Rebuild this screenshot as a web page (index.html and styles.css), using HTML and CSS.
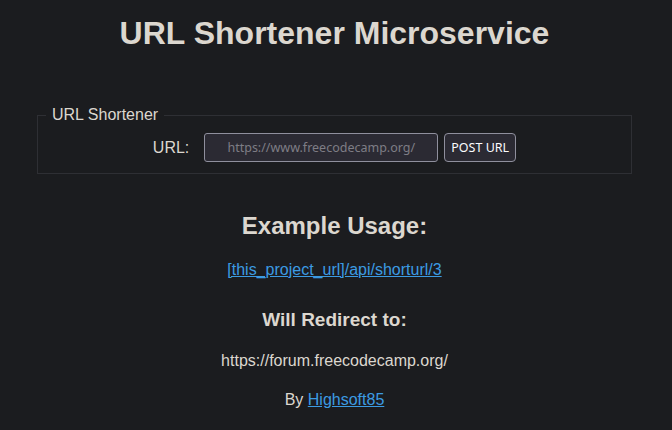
FILE: index.html
```html
<!DOCTYPE html>
<html lang="en">
<head>
    <meta charset="UTF-8">
    <meta name="viewport" content="width=device-width, initial-scale=1.0">
    <title>URL Shortener Microservice</title>
    <link rel="stylesheet" href="styles.css">
</head>
<body>
    <div class="container">
        <h1>URL Shortener Microservice</h1>

        <form class="shortener" action="api/shorturl" method="POST">
            <fieldset>
                <legend>URL Shortener</legend>
                <div class="row">
                    <label for="url_input">URL:</label>
                    <input id="url_input" type="text" name="url" placeholder="https://www.freecodecamp.org/">
                    <button type="submit">POST URL</button>
                </div>
            </fieldset>
        </form>

        <h2>Example Usage:</h2>
        <p>
            <a href="api/shorturl/3">[this_project_url]/api/shorturl/3</a>
        </p>

        <h3>Will Redirect to:</h3>
        <p>https://forum.freecodecamp.org/</p>

        <p class="footer">By <a href="https://github.com/Highsoft85">Highsoft85</a></p>
    </div>
</body>
</html>
```

FILE: styles.css
```css
body {
    font-family: "Liberation Sans", Arial, sans-serif;
    font-size: 16px;
    margin: 0;
    padding: 0;
    background: #1b1c1f;
    color: #dcd7cf;
}

.container {
    width: 595px;
    margin: 0 0 0 37px;
    text-align: center;
}

h1 {
    font-size: 32px;
    margin: 15px 0 0;
    line-height: 37px;
}

.shortener {
    margin-top: 54px;
}

fieldset {
    margin: 0;
    padding: 9px 0 11px;
    border: 1px solid #2e2f34;
    text-align: left;
}

legend {
    margin-left: 8px;
    padding: 0 6px;
    font-size: 16px;
}

.row {
    display: flex;
    align-items: center;
    justify-content: center;
}

label {
    margin-right: 15px;
    font-size: 16px;
}

input {
    box-sizing: border-box;
    width: 234px;
    height: 29px;
    padding: 2px 8px;
    background: #2b2a33;
    border: 1px solid #8f8f9d;
    border-radius: 3px;
    color: #fbfbfe;
    font-family: "Noto Sans", sans-serif;
    font-size: 12.5px;
    text-align: center;
}

input::placeholder {
    color: #7e7d85;
}

button {
    box-sizing: border-box;
    height: 29px;
    margin-left: 6px;
    padding: 0 6px;
    background: #2b2a33;
    border: 1px solid #8f8f9d;
    border-radius: 4px;
    color: #fbfbfe;
    font-family: "Noto Sans", sans-serif;
    font-size: 12.5px;
}

h2 {
    font-size: 24px;
    margin: 38px 0 0;
    line-height: 28px;
}

h3 {
    font-size: 19px;
    margin: 30px 0 0;
    line-height: 22px;
}

p {
    margin: 21px 0 0;
    line-height: 18px;
}

a {
    color: #3c9be3;
}
```
